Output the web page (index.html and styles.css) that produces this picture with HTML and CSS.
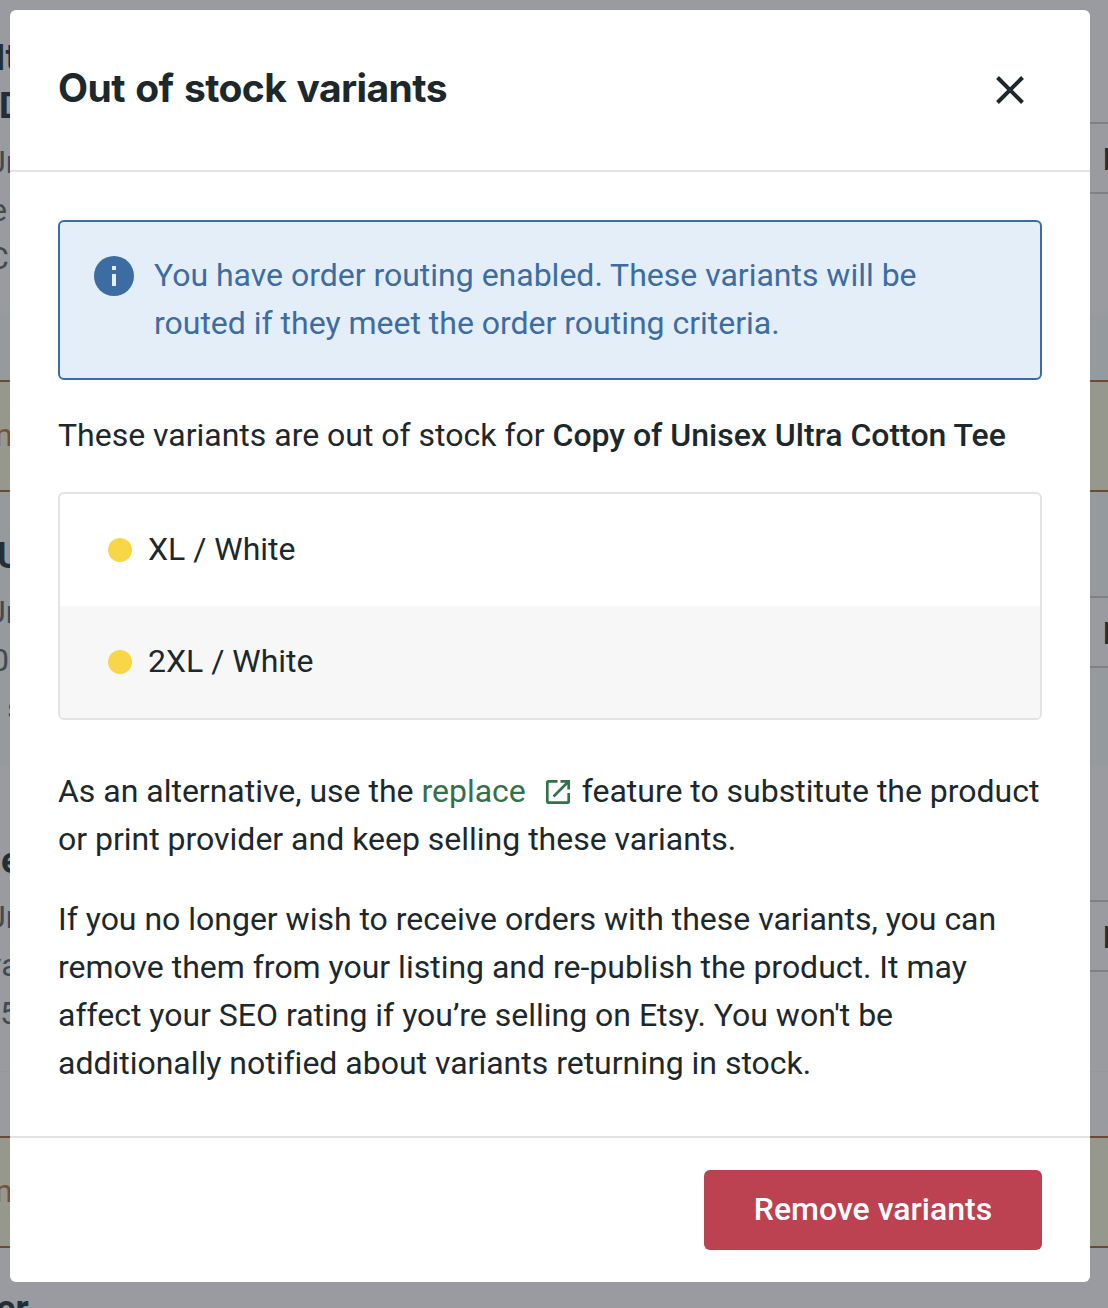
FILE: index.html
```html
<!DOCTYPE html>
<html lang="en">
<head>
<meta charset="utf-8">
<title>Out of stock variants</title>
<link rel="stylesheet" href="styles.css">
</head>
<body>
<div class="page" aria-hidden="true">
  <section class="row row-first">
    <div class="info">
      <p class="name shift-a">It</p>
      <p class="name shift-d">D</p>
      <p class="detail shift-u">Un</p>
      <p class="detail shift-e">e</p>
      <p class="detail shift-c">C</p>
    </div>
    <div class="action">M</div>
  </section>
  <section class="row row-second">
    <div class="banner"><span class="shift-n">n</span></div>
    <div class="content">
      <div class="info">
        <p class="name shift-big-u">U</p>
        <p class="detail shift-u">Un</p>
        <p class="detail shift-o">0</p>
        <p class="detail shift-s">s</p>
      </div>
      <div class="action">M</div>
    </div>
  </section>
  <section class="row row-third">
    <div class="info">
      <p class="name shift-be">e</p>
      <p class="detail shift-u">Un</p>
      <p class="detail shift-va">va</p>
      <p class="detail shift-five">5</p>
    </div>
    <div class="action">M</div>
  </section>
  <section class="row row-fourth">
    <div class="banner"><span class="shift-n">n</span></div>
    <div class="info"><p class="name shift-er">er</p></div>
  </section>
</div>

<main class="modal" role="dialog" aria-labelledby="title">
  <header class="modal-header">
    <h1 class="title" id="title">Out of stock variants</h1>
    <button class="close" aria-label="Close">
      <svg width="32" height="32" viewBox="0 0 32 32"><path d="M3.5 3.5 28.5 28.5M28.5 3.5 3.5 28.5"/></svg>
    </button>
  </header>
  <div class="modal-body">
    <div class="notice">
      <svg class="notice-icon" width="40" height="40" viewBox="0 0 40 40"><circle cx="20" cy="20" r="20"/><path d="M18 10h4v4h-4zM18 18h4v12h-4z"/></svg>
      <p>You have order routing enabled. These variants will be<br>routed if they meet the order routing criteria.</p>
    </div>
    <p class="lead">These variants are out of stock for <strong>Copy of Unisex Ultra Cotton Tee</strong></p>
    <ul class="variants">
      <li class="variant"><span class="dot"></span><span class="variant-name">XL / White</span></li>
      <li class="variant"><span class="dot"></span><span class="variant-name">2XL / White</span></li>
    </ul>
    <p class="alternative">As an alternative, use the <a class="link" href="#">replace<svg class="link-icon" width="26" height="26" viewBox="0 0 26 26"><path d="M12.500 2.300H3.300a1 1 0 0 0-1 1v19.400a1 1 0 0 0 1 1h19.400a1 1 0 0 0 1-1V14M15.500 2.300h8.200v8.200M23 3 8.500 17.500"/></svg></a> feature to substitute the product<br>or print provider and keep selling these variants.</p>
    <p class="explanation">If you no longer wish to receive orders with these variants, you can<br>remove them from your listing and re-publish the product. It may<br>affect your SEO rating if you’re selling on Etsy. You won't be<br>additionally notified about variants returning in stock.</p>
  </div>
  <footer class="modal-footer">
    <button class="remove">Remove variants</button>
  </footer>
</main>
</body>
</html>
```

FILE: styles.css
```css
* { box-sizing: border-box; }
body, p, h1, ul { margin: 0; padding: 0; }
body {
  position: relative;
  width: 1108px;
  height: 1308px;
  overflow: hidden;
  background: #9a9ba0;
  color: #1c282c;
  font: 32px/48px Roboto, sans-serif;
  letter-spacing: -0.01px;
}

/* Dimmed product list behind the dialog */
.page { height: 1308px; overflow: hidden; }
.row, .content { display: flex; justify-content: space-between; }
.row-first { height: 315px; padding-top: 34px; }
.row-second { height: 451px; flex-direction: column; justify-content: flex-start; padding-top: 65px; background: #959a9e; }
.row-third { height: 306px; padding-top: 71px; border-bottom: 1px solid #96969b; }
.row-fourth { flex-direction: column; padding-top: 64px; }
.row-second .content { padding-top: 40px; }
.row-fourth .info { padding-top: 37px; }
.info { width: 40px; white-space: nowrap; }
.name { font-weight: 700; font-size: 36px; color: #242f35; }
.name + .detail { margin-top: 8px; }
.detail { color: #414b50; }
.banner { height: 112px; padding-top: 29px; border: solid #6b4932; border-width: 2px 0; background: #96978d; color: #77523a; }
.banner span { display: block; }
.action { width: 120px; height: 72px; margin-right: -60px; padding: 11px 0 0 53px; border: 2px solid #7e8085; background: #9a9ba0; color: #242f35; font-weight: 700; }
.row-first .action { margin-top: 88px; }
.row-second .action { margin-top: 64px; }
.row-third .action { margin-top: 63px; }
.shift-a { text-indent: -5px; }
.shift-d { text-indent: -1px; }
.shift-u { text-indent: -15px; }
.shift-e { text-indent: -10px; }
.shift-c { text-indent: -12px; }
.shift-n { text-indent: -5px; }
.shift-big-u { text-indent: -3px; }
.shift-o { text-indent: -9px; }
.shift-s { text-indent: 7px; }
.shift-be { text-indent: 1px; }
.shift-va { text-indent: -14px; }
.shift-five { text-indent: 0; }
.shift-er { text-indent: -4px; }

/* Dialog */
.modal { position: absolute; top: 10px; left: 10px; width: 1080px; border-radius: 6px; background: #fff; }
.modal-header { display: flex; align-items: center; justify-content: space-between; height: 162px; padding: 0 64px 0 48px; border-bottom: 2px solid #e3e3e3; }
.title { margin-bottom: 4px; font: 700 39px/48px Inter, sans-serif; letter-spacing: -0.6px; word-spacing: 1.8px; }
.close { width: 32px; height: 32px; padding: 0; border: 0; background: none; }
.close svg { display: block; fill: none; stroke: #1c282c; stroke-width: 4; }
.modal-body { padding: 47px 48px 49px; }
.notice { display: flex; gap: 20px; height: 160px; margin-top: 1px; padding: 29px 34px; border: 2px solid #3c6ca2; border-radius: 6px; background: #e4eef8; color: #3c6ca2; }
.notice-icon { flex: none; margin-top: 5px; }
.notice-icon circle { fill: #3c6ca2; }
.notice-icon path { fill: #e4eef8; }
.lead { margin-top: 31px; white-space: nowrap; }
strong { font-weight: 500; }
.variants { margin-top: 33px; border: 2px solid #e3e3e3; border-radius: 6px; list-style: none; overflow: hidden; }
.variant { display: flex; align-items: center; gap: 16px; height: 112px; padding-left: 48px; }
.variant-name { padding-bottom: 2px; }
.variant:nth-child(even) { background: #f7f7f7; }
.dot { width: 24px; height: 24px; border-radius: 50%; background: #f9d648; }
.alternative { margin-top: 47px; white-space: nowrap; }
.link { color: #34704a; text-decoration: none; }
.link-icon { margin: 0 3px 0 19px; vertical-align: -3px; fill: none; stroke: currentColor; stroke-width: 2.7; }
.explanation { margin-top: 32px; white-space: nowrap; }
.modal-footer { display: flex; justify-content: flex-end; padding: 32px 48px; border-top: 2px solid #e3e3e3; }
.remove { width: 338px; height: 80px; padding: 0 0 2px; border: 0; border-radius: 6px; background: #bc4151; color: #fff; font: 500 32px/48px Roboto, sans-serif; }
```
